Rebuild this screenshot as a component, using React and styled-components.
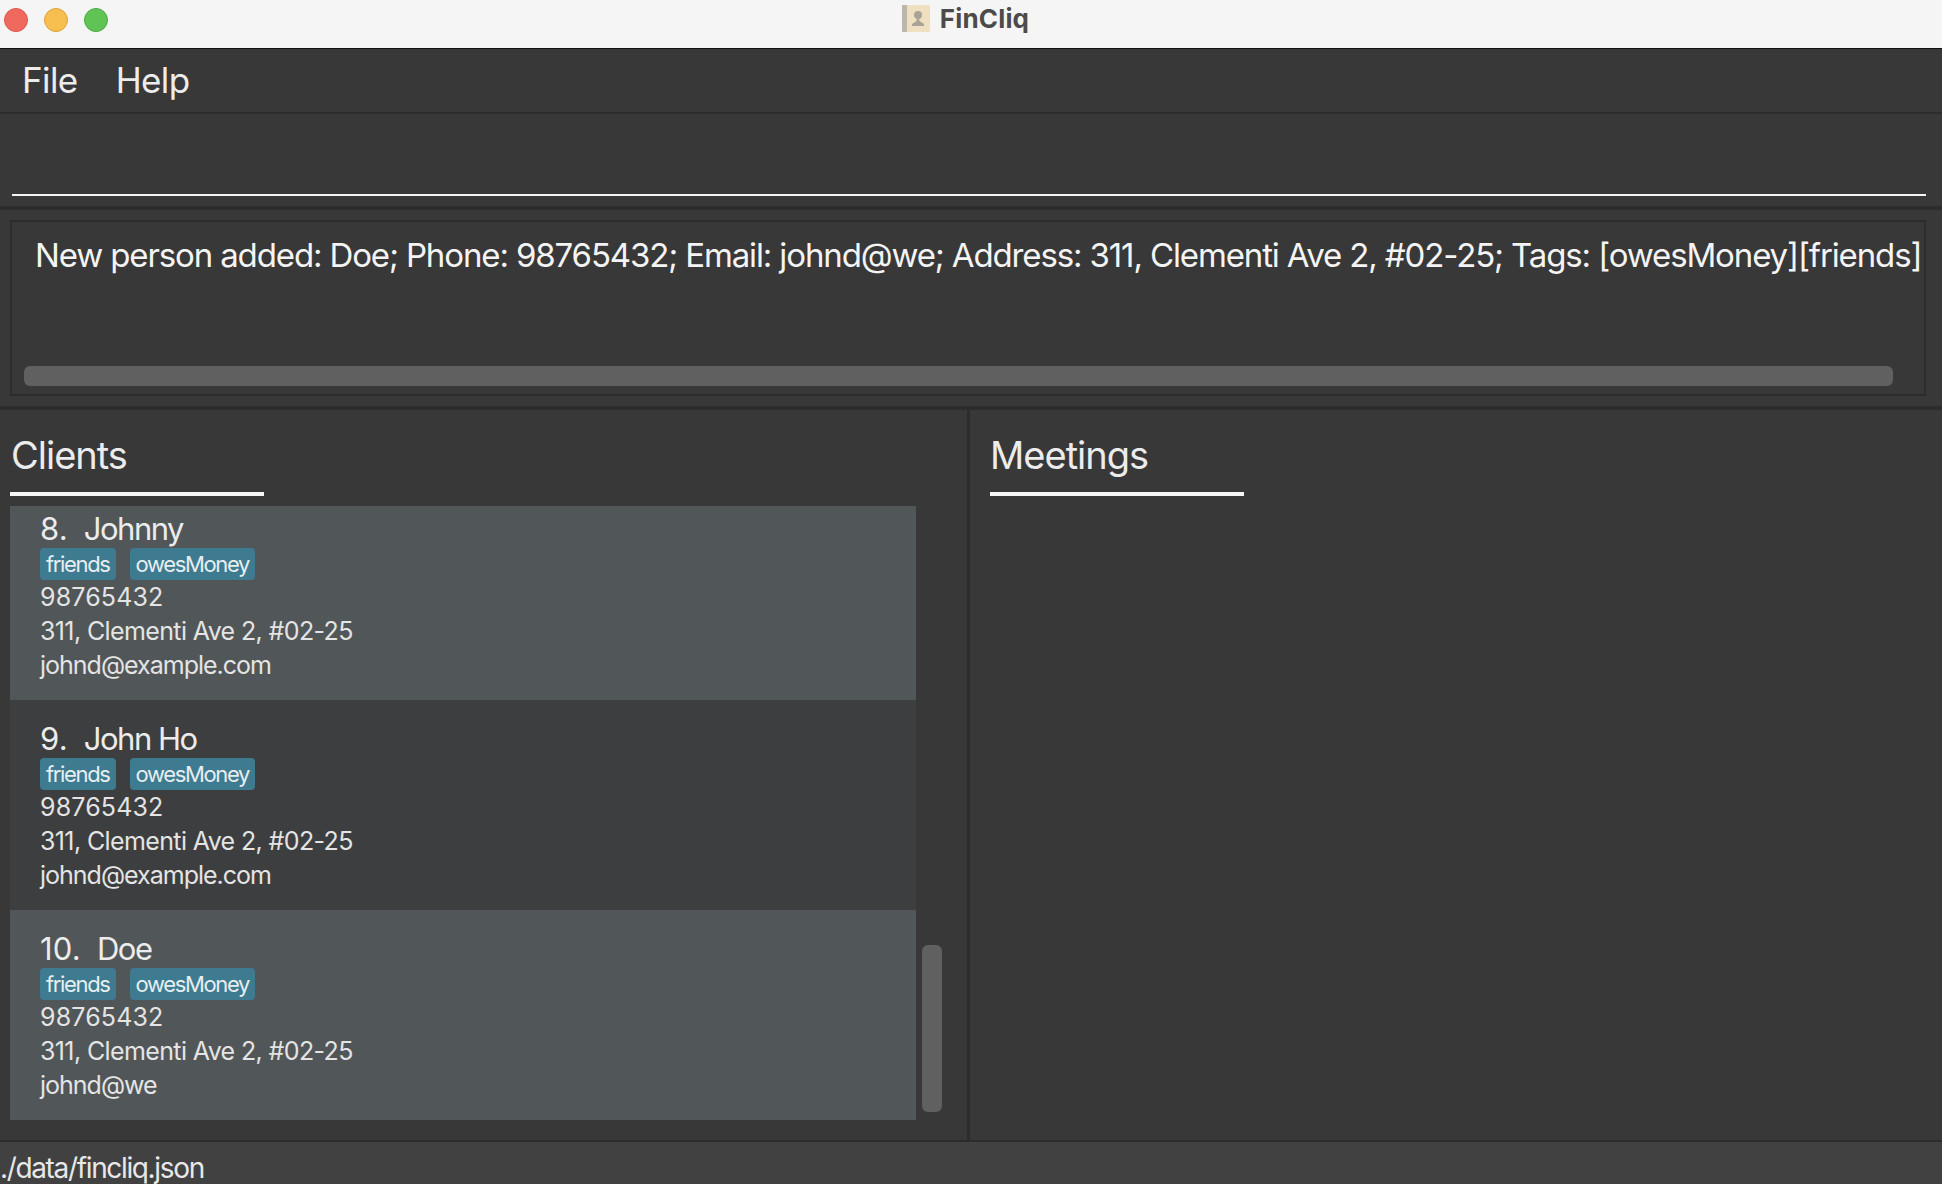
import React from 'react';
import styled, { createGlobalStyle } from 'styled-components';

const GlobalStyle = createGlobalStyle`
  html, body {
    margin: 0;
    padding: 0;
    background: #383838;
  }
  body {
    font-family: Inter, "Noto Sans", "Liberation Sans", sans-serif;
    overflow: hidden;
  }
`;

const Window = styled.div`
  display: flex;
  flex-direction: column;
  width: 1942px;
  height: 1184px;
  overflow: hidden;
  background: #383838;
  color: #f0f0f0;
`;

// Title bar
const TitleBar = styled.div`
  position: relative;
  display: flex;
  align-items: center;
  justify-content: center;
  flex: 0 0 48px;
  background: #f5f5f5;
  border-bottom: 1px solid #111;
`;

const Lights = styled.div`
  position: absolute;
  left: 4px;
  top: 8px;
  display: flex;
  gap: 16px;
`;

const Light = styled.span`
  width: 24px;
  height: 24px;
  box-sizing: border-box;
  border-radius: 50%;
  background: ${(p) => p.$fill};
  border: 1px solid ${(p) => p.$edge};
`;

const TitleGroup = styled.div`
  display: flex;
  align-items: center;
  gap: 10px;
  margin-left: -11px;
  margin-top: -11px;
`;

const TitleText = styled.span`
  font-size: 26px;
  font-weight: 700;
  color: #4b4b4b;
  letter-spacing: 0.15px;
`;

// Menu
const MenuBar = styled.div`
  display: flex;
  align-items: center;
  flex: 0 0 65px;
  box-sizing: border-box;
  gap: 38px;
  padding-left: 22px;
  padding-bottom: 2px;
  border-bottom: 2px solid #2c2c2c;
`;

const MenuItem = styled.span`
  font-size: 35px;
  letter-spacing: -0.6px;
  color: #ececec;
`;

// Command box
const CommandBar = styled.div`
  display: flex;
  flex: 0 0 96px;
  box-sizing: border-box;
  padding: 0 16px 10px 12px;
  border-bottom: 4px solid #2c2c2c;
`;

const CommandInput = styled.div`
  flex: 1;
  border-bottom: 2px solid #f4f4f4;
`;

// Result box
const ResultBar = styled.div`
  display: flex;
  flex: 0 0 200px;
  box-sizing: border-box;
  padding: 10px 16px 10px 10px;
  border-bottom: 4px solid #2c2c2c;
`;

const ResultBox = styled.div`
  display: flex;
  flex-direction: column;
  justify-content: space-between;
  flex: 1;
  min-width: 0;
  box-sizing: border-box;
  border: 2px solid #2c2c2c;
  padding: 10px 0 8px 12px;
`;

const ResultText = styled.div`
  font-size: 33px;
  line-height: 46px;
  white-space: nowrap;
  padding-left: 11px;
  letter-spacing: -1.13px;
  color: #f4f4f4;
`;

const HorizontalThumb = styled.div`
  height: 20px;
  margin-right: 31px;
  border-radius: 6px;
  background: #606060;
`;

// Lower panes
const Panes = styled.div`
  display: flex;
  flex: 1;
  min-height: 0;
`;

const ClientsPane = styled.section`
  display: flex;
  flex-direction: column;
  flex: 0 0 970px;
  box-sizing: border-box;
  padding-left: 10px;
  border-right: 3px solid #2c2c2c;
`;

const MeetingsPane = styled.section`
  flex: 1;
  padding-left: 20px;
`;

const PaneTitle = styled.h2`
  height: 82px;
  margin: 0;
  border-bottom: 4px solid #f6f6f6;
  font-size: 38px;
  font-weight: 400;
  line-height: 90px;
  letter-spacing: -1px;
  color: #ececec;
  padding-left: ${(p) => p.$inset || 0}px;
  width: ${(p) => 254 - (p.$inset || 0)}px;
`;

const ListRow = styled.div`
  display: flex;
  gap: 6px;
  margin-top: 10px;
`;

const List = styled.div`
  width: 906px;
  height: 614px;
  overflow: hidden;
`;

const Card = styled.article`
  box-sizing: border-box;
  height: ${(p) => (p.$clipped ? 194 : 210)}px;
  padding: ${(p) => (p.$clipped ? 2 : 18)}px 0 0 30px;
  background: ${(p) => (p.$light ? '#515658' : '#3c3e3f')};
`;

const Name = styled.div`
  display: flex;
  gap: 16px;
  font-size: 31px;
  line-height: 42px;
  height: 40px;
  letter-spacing: -1.5px;
  color: #ececec;
`;

const Index = styled.span`
  letter-spacing: 0.2px;
`;

const Tags = styled.div`
  display: flex;
  gap: 14px;
`;

const Tag = styled.span`
  display: block;
  height: 32px;
  padding: 0 6px;
  border-radius: 4px;
  background: #3e7b91;
  font-size: 22px;
  line-height: 32px;
  letter-spacing: -1.35px;
  color: #e6eef0;
`;

const Detail = styled.div`
  font-size: 25px;
  line-height: 34px;
  letter-spacing: ${(p) => p.$spacing}px;
  color: #e4e4e4;
`;

const ScrollTrack = styled.div`
  padding-top: 439px;
`;

const VerticalThumb = styled.div`
  width: 20px;
  height: 167px;
  border-radius: 6px;
  background: #606060;
`;

const StatusBar = styled.footer`
  flex: 0 0 42px;
  border-top: 2px solid #2c2c2c;
  background: #414141;
  font-size: 28px;
  line-height: 52px;
  letter-spacing: -1.35px;
  color: #e8e8e8;
  white-space: nowrap;
  overflow: hidden;
`;

const AddressBookIcon = () => (
  <svg width="28" height="27" viewBox="0 0 28 27" aria-hidden="true">
    <rect x="0" y="0" width="28" height="27" rx="1" fill="#f0e0c2" />
    <rect x="0" y="0" width="5" height="27" rx="1" fill="#bdb6aa" />
    <circle cx="16" cy="10" r="4" fill="#a9a297" />
    <path d="M15 13h2l.5 3 4.5 3v2H10v-2l4.5-3z" fill="#a9a297" />
  </svg>
);

const clients = [
  { id: 8, name: 'Johnny', email: 'johnd@example.com', clipped: true, light: true },
  { id: 9, name: 'John Ho', email: 'johnd@example.com' },
  { id: 10, name: 'Doe', email: 'johnd@we', light: true },
];

const ClientCard = ({ client }) => (
  <Card $clipped={client.clipped} $light={client.light}>
    <Name>
      <Index>{client.id}.</Index>
      <span>{client.name}</span>
    </Name>
    <Tags>
      <Tag>friends</Tag>
      <Tag>owesMoney</Tag>
    </Tags>
    <Detail $spacing={0.15}>98765432</Detail>
    <Detail $spacing={-0.62}>311, Clementi Ave 2, #02-25</Detail>
    <Detail $spacing={-1}>{client.email}</Detail>
  </Card>
);

export default function App() {
  return (
    <>
      <GlobalStyle />
      <Window>
        <TitleBar>
          <Lights>
            <Light $fill="#f0695f" $edge="#d9564c" />
            <Light $fill="#f6bf50" $edge="#dca33c" />
            <Light $fill="#60c454" $edge="#4fa845" />
          </Lights>
          <TitleGroup>
            <AddressBookIcon />
            <TitleText>FinCliq</TitleText>
          </TitleGroup>
        </TitleBar>
        <MenuBar>
          <MenuItem>File</MenuItem>
          <MenuItem>Help</MenuItem>
        </MenuBar>
        <CommandBar>
          <CommandInput />
        </CommandBar>
        <ResultBar>
          <ResultBox>
            <ResultText>
              New person added: Doe; Phone: 98765432; Email: johnd@we; Address: 311, Clementi Ave 2, #02-25; Tags: [owesMoney][friends]
            </ResultText>
            <HorizontalThumb />
          </ResultBox>
        </ResultBar>
        <Panes>
          <ClientsPane>
            <PaneTitle $inset={1}>Clients</PaneTitle>
            <ListRow>
              <List>
                {clients.map((client) => (
                  <ClientCard key={client.id} client={client} />
                ))}
              </List>
              <ScrollTrack>
                <VerticalThumb />
              </ScrollTrack>
            </ListRow>
          </ClientsPane>
          <MeetingsPane>
            <PaneTitle>Meetings</PaneTitle>
          </MeetingsPane>
        </Panes>
        <StatusBar>./data/fincliq.json</StatusBar>
      </Window>
    </>
  );
}
